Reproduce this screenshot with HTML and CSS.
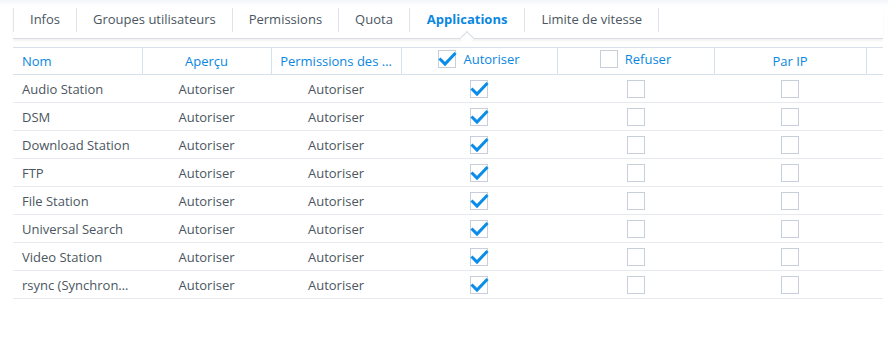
FILE: index.html
```html
<!DOCTYPE html>
<html lang="fr">
<head>
    <meta charset="UTF-8">
    <title>Applications</title>
    <link rel="stylesheet" href="styles.css">
</head>
<body>
    <div class="page">
        <div class="tabbar">
            <div class="tab">Infos</div>
            <div class="tab">Groupes utilisateurs</div>
            <div class="tab">Permissions</div>
            <div class="tab">Quota</div>
            <div class="tab active">Applications</div>
            <div class="tab">Limite de vitesse</div>
        </div>

        <table class="grid">
            <colgroup>
                <col class="c-name">
                <col class="c-prev">
                <col class="c-perm">
                <col class="c-allow">
                <col class="c-deny">
                <col class="c-ip">
                <col>
            </colgroup>
            <thead>
                <tr>
                    <th class="left">Nom</th>
                    <th>Aperçu</th>
                    <th>Permissions des …</th>
                    <th><span class="hcheck"><span class="box checked"><svg viewBox="0 0 18 18"><path d="M2.5 9.5 L7 14 L16.5 4"/></svg></span>Autoriser</span></th>
                    <th><span class="hcheck"><span class="box"></span>Refuser</span></th>
                    <th>Par IP</th>
                    <th class="spacer"></th>
                </tr>
            </thead>
            <tbody id="rows"></tbody>
        </table>
    </div>

    <script>
        // Application rows
        const apps = ['Audio Station', 'DSM', 'Download Station', 'FTP', 'File Station', 'Universal Search', 'Video Station', 'rsync (Synchron…'];
        const tbody = document.getElementById('rows');
        const check = '<span class="box checked"><svg viewBox="0 0 18 18"><path d="M2.5 9.5 L7 14 L16.5 4"/></svg></span>';

        apps.forEach(function(name) {
            const tr = document.createElement('tr');
            tr.innerHTML =
                '<td class="left">' + name + '</td>' +
                '<td>Autoriser</td>' +
                '<td>Autoriser</td>' +
                '<td>' + check + '</td>' +
                '<td><span class="box"></span></td>' +
                '<td><span class="box"></span></td>' +
                '<td></td>';
            tbody.appendChild(tr);
        });
    </script>
</body>
</html>
```

FILE: styles.css
```css
body {
    margin: 0;
    font-family: 'Open Sans', 'Liberation Sans', sans-serif;
    font-size: 13px;
    color: #4b5661;
    background: linear-gradient(#f3f6fa, #ffffff 6px);
    height: 362px;
    overflow: hidden;
}

.page {
    width: 870px;
    margin-left: 13px;
    padding-top: 8px;
}

.tabbar {
    display: flex;
    height: 30px;
    border-bottom: 1px solid #d9dde1;
    box-shadow: 0 2px 2px rgba(0, 0, 0, 0.05);
    position: relative;
}

.tab {
    height: 24px;
    line-height: 22px;
    padding: 0 16px;
    border-left: 1px solid #dde4ec;
    position: relative;
}

.tab:last-child {
    border-right: 1px solid #dde4ec;
}

.tab.active {
    color: #0a87e0;
    font-weight: 700;
    padding: 0 17px;
}

.tab.active:after {
    content: "";
    position: absolute;
    left: 50%;
    bottom: -11px;
    width: 9px;
    height: 9px;
    margin-left: -5px;
    background: #ffffff;
    border-top: 1px solid #d9dde1;
    border-left: 1px solid #d9dde1;
    transform: rotate(45deg);
}

.grid {
    width: 870px;
    margin-top: 8px;
    border-collapse: collapse;
    table-layout: fixed;
}

.c-name { width: 129px; }
.c-prev { width: 129px; }
.c-perm { width: 130px; }
.c-allow { width: 156px; }
.c-deny { width: 157px; }
.c-ip { width: 152px; }

th {
    height: 26px;
    padding: 0 8px;
    font-weight: 400;
    color: #0a87e0;
    text-align: center;
    border-top: 1px solid #d6e1ec;
    border-bottom: 1px solid #d6e1ec;
    border-right: 1px solid #d6e1ec;
    white-space: nowrap;
    overflow: hidden;
}

th.spacer {
    border-right: none;
}

td {
    height: 27px;
    padding: 0 8px;
    text-align: center;
    border-bottom: 1px solid #e6eaee;
    white-space: nowrap;
    overflow: hidden;
}

.left {
    text-align: left;
    padding-left: 9px;
}

.hcheck {
    display: inline-flex;
    align-items: center;
    gap: 7px;
}

.box {
    display: inline-block;
    width: 16px;
    height: 16px;
    border: 1px solid #c7d0da;
    background: #ffffff;
    vertical-align: middle;
    position: relative;
}

.box svg {
    position: absolute;
    left: -1px;
    top: -1px;
    width: 18px;
    height: 18px;
    overflow: visible;
}

.box svg path {
    fill: none;
    stroke: #0a8de8;
    stroke-width: 3;
    stroke-linecap: square;
}
```
